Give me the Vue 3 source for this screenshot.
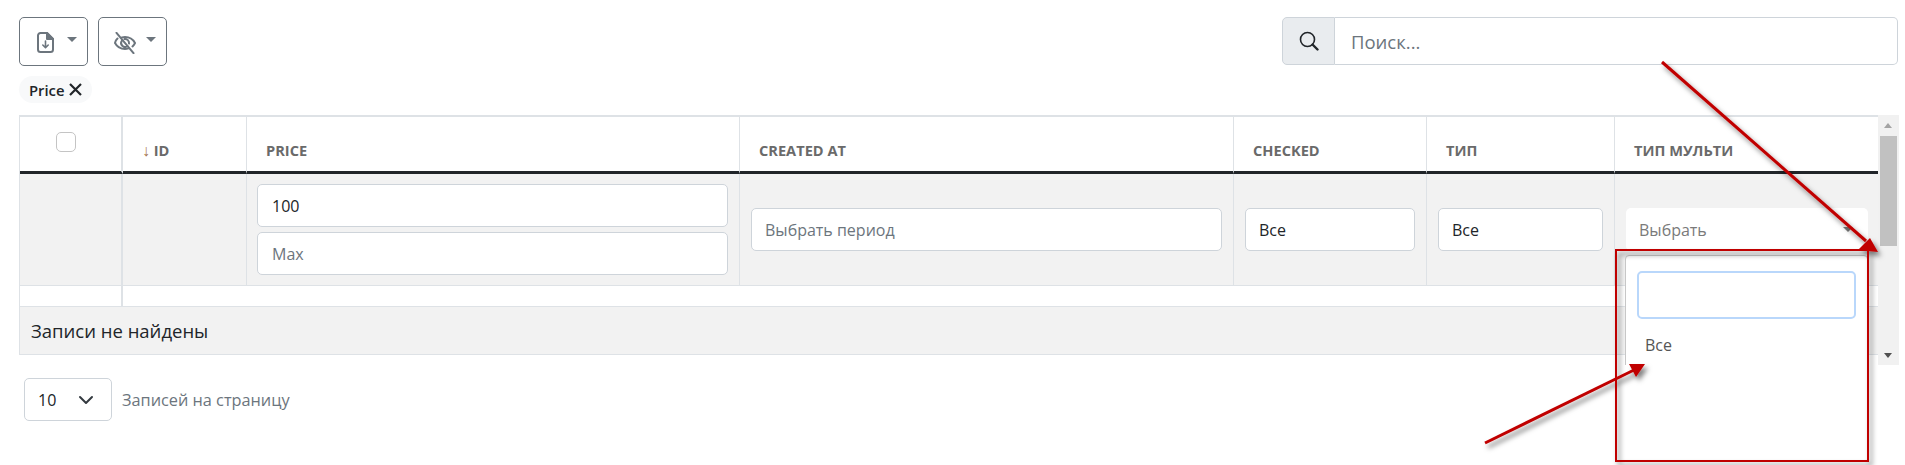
<script setup>
const columns = [
  { key: 'id', title: 'ID', width: 124 },
  { key: 'price', title: 'PRICE', width: 493 },
  { key: 'created', title: 'CREATED AT', width: 494 },
  { key: 'checked', title: 'CHECKED', width: 193 },
  { key: 'type', title: 'ТИП', width: 188 },
  { key: 'multi', title: 'ТИП МУЛЬТИ', width: 264 }
]
</script>

<template>
  <div class="page">
    <div class="toolbar">
      <div class="tools">
        <button class="tool-btn">
          <svg width="17" height="21" viewBox="0 0 17 21" fill="none" stroke="#6c757d" stroke-width="2" stroke-linejoin="round" stroke-linecap="round">
            <path d="M3.500 1h6.500l6 6v10.500a2.500 2.500 0 0 1-2.500 2.500h-10A2.500 2.500 0 0 1 1 17.500v-14A2.500 2.500 0 0 1 3.500 1z" />
            <path d="M10 1v6h6z" fill="#6c757d" />
            <path d="M8.500 9v6.500M5.800 13l2.700 2.700 2.700-2.700" stroke-width="1.600" />
          </svg>
          <span class="caret"></span>
        </button>
        <button class="tool-btn">
          <svg class="eye" width="22" height="22" viewBox="0 0 22 22" fill="none" stroke="#6c757d" stroke-width="2" stroke-linecap="round">
            <path d="M3.500 6.500C2.200 7.700 1.300 9 1 11c2 3.700 5.800 6 10 6 1.200 0 2.400-.2 3.500-.6" />
            <path d="M8 5.400c1-.3 2-.4 3-.4 4.200 0 8 2.300 10 6-.6 1.300-1.400 2.400-2.500 3.400" />
            <path d="M8 8.500a4 4 0 0 0 5.500 5.700M10.500 7a4 4 0 0 1 4.500 4.500" />
            <path d="M2.500 0.800l17 20.400" />
          </svg>
          <span class="caret"></span>
        </button>
      </div>
      <div class="search">
        <span class="search-addon">
          <svg width="20" height="20" viewBox="0 0 20 20" fill="none" stroke="#212529">
            <circle cx="8.500" cy="8.500" r="7" stroke-width="1.600" />
            <path d="M13.500 13.500l5 5" stroke-width="2.400" stroke-linecap="round" />
          </svg>
        </span>
        <input class="search-input" type="text" placeholder="Поиск..." />
      </div>
    </div>

    <div class="chips">
      <span class="chip">Price
        <svg width="13" height="13" viewBox="0 0 13 13" stroke="#212529" stroke-width="2.200">
          <path d="M1 1l11 11M12 1L1 12" />
        </svg>
      </span>
    </div>

    <div class="table-wrap">
      <div class="table-scroll">
        <table class="grid">
          <colgroup>
            <col style="width: 103px" />
            <col v-for="c in columns" :key="c.key" :style="{ width: c.width + 'px' }" />
          </colgroup>
          <thead>
            <tr class="head-row">
              <th class="check-col"><span class="check"></span></th>
              <th v-for="c in columns" :key="c.key">
                <span v-if="c.key === 'id'" class="sort">↓</span> {{ c.title }}
              </th>
            </tr>
          </thead>
          <tbody>
            <tr class="filter-row">
              <td class="check-col"></td>
              <td></td>
              <td>
                <div class="stack">
                  <input class="field" type="text" value="100" />
                  <input class="field" type="text" placeholder="Max" />
                </div>
              </td>
              <td><input class="field" type="text" placeholder="Выбрать период" /></td>
              <td><div class="field select-text">Все</div></td>
              <td><div class="field select-text">Все</div></td>
              <td>
                <div class="multi-box">
                  <span>Выбрать</span>
                  <span class="multi-caret"></span>
                </div>
              </td>
            </tr>
            <tr class="gap-row">
              <td class="check-col"></td>
              <td colspan="6"></td>
            </tr>
            <tr class="empty-row">
              <td colspan="7">Записи не найдены</td>
            </tr>
          </tbody>
        </table>
        <div class="dropdown">
          <div class="dropdown-search"></div>
          <div class="dropdown-item">Все</div>
        </div>
      </div>
      <div class="scrollbar">
        <span class="arrow up"></span>
        <span class="thumb"></span>
        <span class="arrow down"></span>
      </div>
    </div>

    <div class="pager">
      <div class="page-size">
        <span>10</span>
        <svg width="16" height="10" viewBox="0 0 16 10" fill="none" stroke="#343a40" stroke-width="2" stroke-linecap="round" stroke-linejoin="round">
          <path d="M2 2l6 6 6-6" />
        </svg>
      </div>
      <span class="pager-label">Записей на страницу</span>
    </div>

    <svg class="marks" width="1905" height="465" viewBox="0 0 1905 465">
      <defs>
        <filter id="shade" x="-10%" y="-10%" width="125%" height="125%">
          <feDropShadow dx="3" dy="4" stdDeviation="2.500" flood-color="#000" flood-opacity="0.5" />
        </filter>
      </defs>
      <g filter="url(#shade)">
        <rect x="1616" y="250" width="252" height="211" fill="none" stroke="#c00000" stroke-width="2" />
        <path d="M1662 62L1866 241" stroke="#c00000" stroke-width="3" fill="none" />
        <path d="M1878 252L1870 238 1858 250z" fill="#c00000" />
        <path d="M1485 443L1634 370" stroke="#c00000" stroke-width="3" fill="none" />
        <path d="M1645 364L1629 364 1636 377z" fill="#c00000" />
      </g>
    </svg>
  </div>
</template>

<style scoped>
.page {
  position: relative;
  width: 1905px;
  height: 465px;
  overflow: hidden;
  padding: 17px 0 0 19px;
  box-sizing: border-box;
  font-family: "Open Sans", sans-serif;
  font-size: 16px;
  color: #212529;
  background: #fff;
}

.toolbar {
  display: flex;
  justify-content: space-between;
  width: 1879px;
  height: 49px;
}

.tools {
  display: flex;
  gap: 10px;
}

.tool-btn {
  display: flex;
  align-items: flex-start;
  width: 69px;
  height: 49px;
  padding: 14px 0 0 17px;
  background: #fff;
  border: 1px solid #6c757d;
  border-radius: 5px;
  box-sizing: border-box;
}

.tool-btn .eye {
  margin-left: -2px;
}

.caret {
  width: 0;
  height: 0;
  margin: 5px 0 0 13px;
  border-left: 5px solid transparent;
  border-right: 5px solid transparent;
  border-top: 5px solid #6c757d;
}

.eye + .caret {
  margin-left: 10px;
}

.search {
  display: flex;
  width: 616px;
  height: 48px;
}

.search-addon {
  display: flex;
  align-items: center;
  justify-content: center;
  width: 53px;
  background: #e9ecef;
  border: 1px solid #ced4da;
  border-radius: 5px 0 0 5px;
  box-sizing: border-box;
}

.search-input {
  flex: 1;
  min-width: 0;
  padding: 0 16px;
  border: 1px solid #ced4da;
  border-left: 0;
  border-radius: 0 5px 5px 0;
  font: inherit;
  font-size: 18.500px;
  outline: none;
}

input::placeholder {
  color: #6c757d;
  opacity: 1;
}

.chips {
  display: flex;
  margin-top: 10px;
  height: 27px;
}

.chip {
  display: flex;
  align-items: center;
  gap: 5px;
  width: 73px;
  padding-left: 10px;
  box-sizing: border-box;
  background: #f8f9fa;
  border-radius: 14px;
  font-size: 14.800px;
  font-weight: 600;
}

.table-wrap {
  display: flex;
  height: 250px;
  margin-top: 12px;
  width: 1880px;
}

.table-scroll {
  position: relative;
  width: 1859px;
  height: 250px;
  overflow: hidden;
}

.grid {
  width: 1859px;
  table-layout: fixed;
  border-collapse: separate;
  border-spacing: 0;
  border-top: 2px solid #dee2e6;
  border-left: 1px solid #dee2e6;
  border-right: 1px solid #dee2e6;
  box-sizing: border-box;
}

.grid th,
.grid td {
  padding: 0;
  border-right: 1px solid #dee2e6;
  box-sizing: border-box;
}

.grid th:last-child,
.grid td:last-child {
  border-right: 0;
}

.grid .check-col {
  border-right: 2px solid #dee2e6;
}

.head-row {
  height: 57px;
}

.head-row th {
  padding: 12px 0 0 19px;
  border-bottom: 3px solid #212529;
  font-size: 14.600px;
  font-weight: 700;
  text-align: left;
  color: #6a6a6a;
}

.head-row .check-col {
  padding: 0;
  text-align: left;
  vertical-align: top;
}

.check {
  display: block;
  width: 20px;
  height: 20px;
  margin: 15px 0 0 36px;
  border: 1px solid #c4c4c4;
  border-radius: 5px;
  box-sizing: border-box;
}

.sort {
  color: #a5764f;
  font-size: 16px;
  font-weight: 400;
}

.filter-row {
  height: 112px;
}

.filter-row td {
  padding: 0 11px;
  background: #f2f2f2;
  border-bottom: 1px solid #dee2e6;
}

.filter-row .check-col {
  padding: 0;
}

.stack {
  display: flex;
  flex-direction: column;
  gap: 5px;
  margin-left: -1px;
}

.stack .field {
  padding-left: 14px;
}

.field {
  display: block;
  width: 100%;
  height: 43px;
  padding: 0 13px;
  background: #fff;
  border: 1px solid #ced4da;
  border-radius: 5px;
  box-sizing: border-box;
  font: inherit;
  font-size: 16px;
  color: #212529;
  outline: none;
}

.select-text {
  display: flex;
  align-items: center;
}

.multi-box {
  position: relative;
  display: flex;
  align-items: center;
  height: 43px;
  padding-left: 13px;
  background: #fff;
  border-radius: 5px;
  font-size: 16px;
  color: #7a7a7a;
}

.multi-caret {
  position: absolute;
  right: 15px;
  top: 19px;
  border-left: 5px solid transparent;
  border-right: 5px solid transparent;
  border-top: 5px solid #7a7a7a;
}

.gap-row {
  height: 21px;
}

.gap-row td {
  border-bottom: 1px solid #dee2e6;
}

.empty-row {
  height: 48px;
}

.empty-row td {
  padding-left: 11px;
  background: #f2f2f2;
  border-bottom: 1px solid #dee2e6;
  font-size: 18.500px;
}

.dropdown {
  position: absolute;
  left: 1606px;
  top: 140px;
  width: 243px;
  height: 200px;
  padding: 15px 11px 0;
  background: #fff;
  border: 1px solid #c8c8c8;
  border-radius: 4px 4px 0 0;
  box-sizing: border-box;
}

.dropdown-search {
  height: 48px;
  box-sizing: border-box;
  border: 2px solid #b9d7fb;
  border-radius: 5px;
}

.dropdown-item {
  margin-top: 15px;
  padding-left: 8px;
  font-size: 16px;
  color: #555;
}

.scrollbar {
  position: relative;
  width: 21px;
  height: 250px;
  background: #f1f1f1;
}

.thumb {
  position: absolute;
  left: 2px;
  right: 2px;
  top: 21px;
  height: 110px;
  background: #c1c1c1;
}

.arrow {
  position: absolute;
  left: 6px;
  border-left: 4.500px solid transparent;
  border-right: 4.500px solid transparent;
}

.arrow.up {
  top: 8px;
  border-bottom: 5px solid #a3a3a3;
}

.arrow.down {
  bottom: 7px;
  border-top: 5px solid #505050;
}

.pager {
  display: flex;
  align-items: center;
  gap: 10px;
  margin: 13px 0 0 5px;
}

.page-size {
  display: flex;
  align-items: center;
  justify-content: space-between;
  width: 88px;
  height: 43px;
  padding: 0 17px 0 13px;
  border: 1px solid #ced4da;
  border-radius: 5px;
  box-sizing: border-box;
  font-size: 16px;
}

.pager-label {
  font-size: 16.300px;
  color: #6c757d;
}

.marks {
  position: absolute;
  left: 0;
  top: 0;
  pointer-events: none;
}
</style>
